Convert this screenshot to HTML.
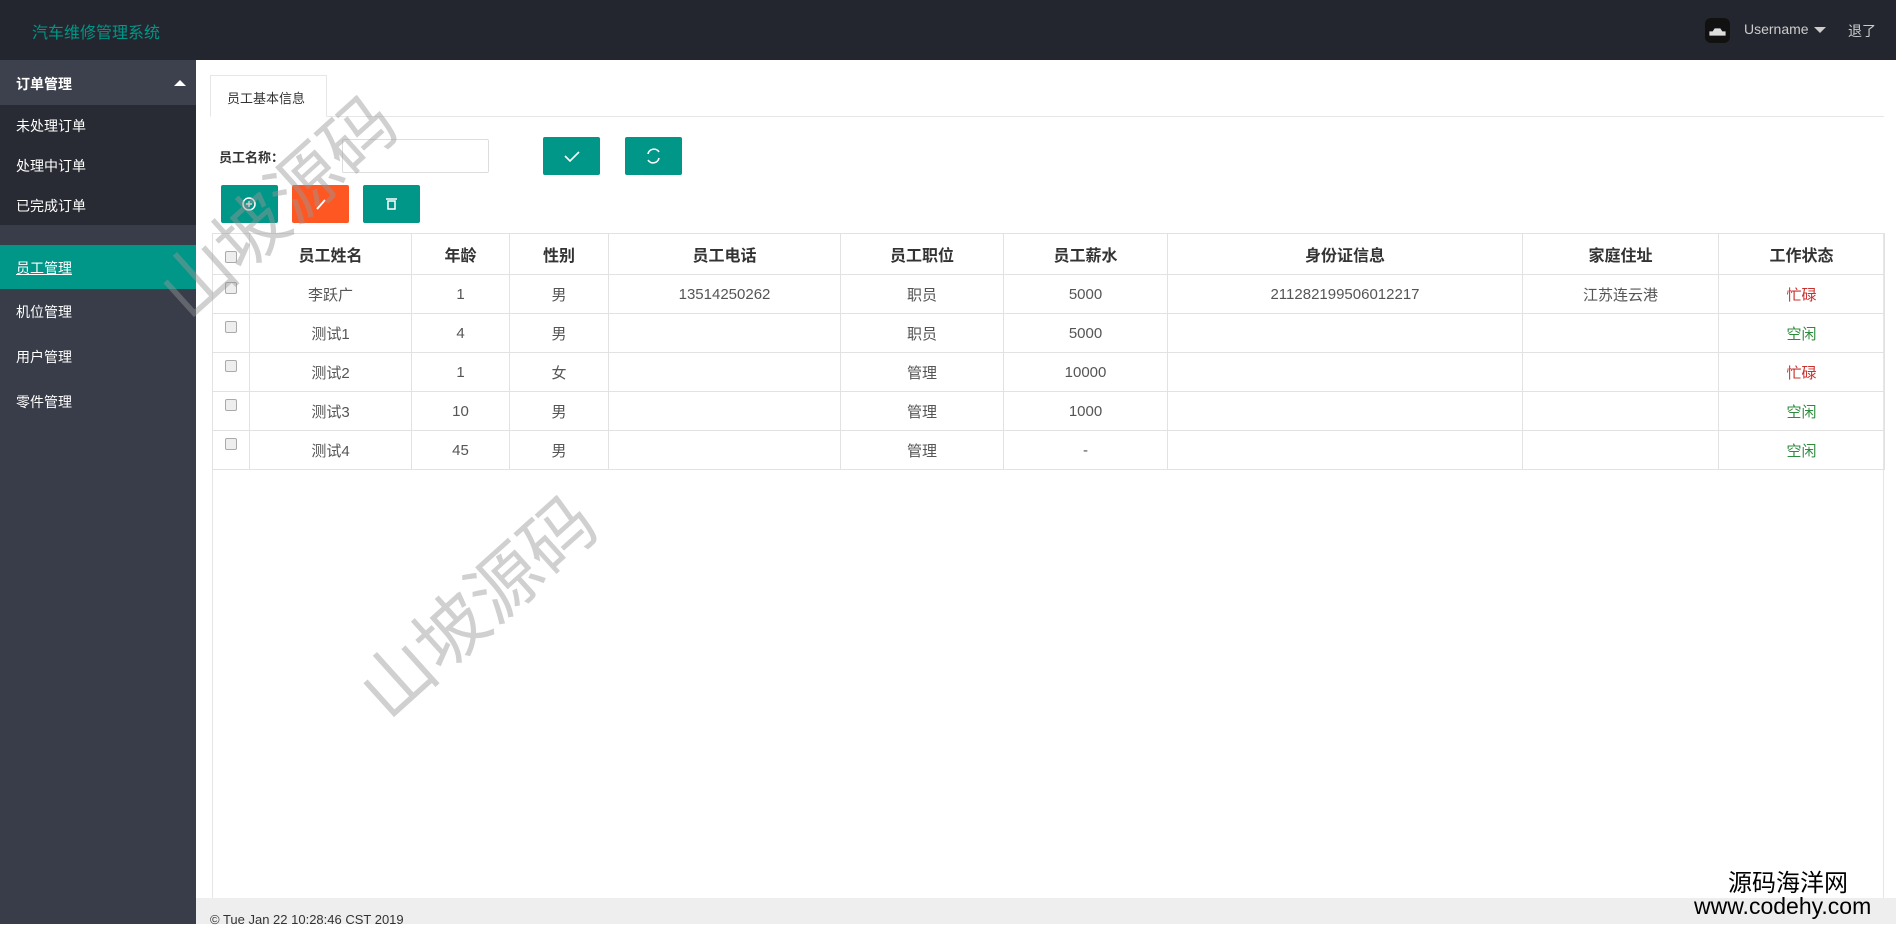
<!DOCTYPE html>
<html><head><meta charset="utf-8"><style>
*{margin:0;padding:0;box-sizing:border-box}
body{width:1896px;height:924px;overflow:hidden;position:relative;background:#fff;font-family:"Liberation Sans","Noto Sans CJK SC",sans-serif;color:#333}
.hdr{position:absolute;left:0;top:0;width:1896px;height:60px;background:#23262e}
.logo{position:absolute;left:32px;top:19px;color:#009688;font-size:16px}
.side{position:absolute;left:0;top:60px;width:196px;height:864px;background:#393d49}
.sh{position:absolute;left:0;top:0;width:196px;height:45px;background:#3d414d;color:#fff;font-size:14px;font-weight:bold;padding:14px 16px}
.tri{position:absolute;right:10px;top:20px;width:0;height:0;border-left:6px solid transparent;border-right:6px solid transparent;border-bottom:6px solid #fff}
.sub{position:absolute;left:0;top:45px;width:196px;height:120px;background:#282b33}
.sub div,.it{position:absolute;left:16px;color:#fff;font-size:14px}
.act{position:absolute;left:0;top:185px;width:196px;height:44px;background:#009688}
.tab{position:absolute;left:210px;top:75px;width:117px;height:42px;border:1px solid #e6e6e6;border-bottom:1px solid #fff;background:#fff;font-size:13px;padding:12px 0 0 16px;color:#333}
.tabline{position:absolute;left:210px;top:116px;width:1674px;height:1px;background:#e6e6e6}
.btn{position:absolute;height:38px;width:57px;border-radius:2px;background:#009688}
.box{position:absolute;left:212px;top:233px;width:1672px;height:666px;border:1px solid #e6e6e6;border-bottom:none}
table{position:absolute;left:212px;top:233px;border-collapse:collapse;font-size:15px}
td,th{border:1px solid #e2e2e2;text-align:center;height:39px;color:#555;font-weight:normal}
th{height:41px;font-weight:bold;color:#333;font-size:16px}
.cb{display:inline-block;width:12px;height:12px;border:1px solid #aaa;border-radius:2px;background:#eee;vertical-align:top;margin-top:-4px}
.r{color:#c9302c}.g{color:#2e8b3d}
.foot{position:absolute;left:196px;top:898px;width:1700px;height:26px;background:#eee;font-size:13px;color:#333;padding:14px 0 0 14px}
.wm{position:absolute;color:rgba(150,150,150,.45);font-size:72px;transform:rotate(-42deg);white-space:nowrap;font-family:"Noto Sans CJK SC",sans-serif}
</style></head><body>
<div class="hdr"><div class="logo">汽车维修管理系统</div>
<div style="position:absolute;left:1705px;top:18px;width:25px;height:25px;border-radius:6px;background:#111"><svg width="25" height="25"><path d="M5 14h15v3H5zM8 14l2-3h5l2 3" stroke="#ddd" stroke-width="1.2" fill="#ddd"/></svg></div>
<div style="position:absolute;left:1744px;top:21px;color:#ccc;font-size:14px">Username</div>
<div style="position:absolute;left:1814px;top:27px;border-left:6px solid transparent;border-right:6px solid transparent;border-top:6px solid #ccc"></div>
<div style="position:absolute;left:1848px;top:21px;color:#ccc;font-size:14px">退了</div>
</div>
<div class="side">
<div class="sh">订单管理<div class="tri"></div></div>
<div class="sub"><div style="top:11px">未处理订单</div><div style="top:51px">处理中订单</div><div style="top:91px">已完成订单</div></div>
<div class="act"><div class="it" style="top:13px;text-decoration:underline">员工管理</div></div>
<div class="it" style="top:242px">机位管理</div>
<div class="it" style="top:287px">用户管理</div>
<div class="it" style="top:332px">零件管理</div>
</div>
<div class="tabline"></div>
<div class="tab">员工基本信息</div>
<div style="position:absolute;left:219px;top:147px;font-size:13px;font-weight:bold">员工名称：</div>
<div style="position:absolute;left:342px;top:139px;width:147px;height:34px;border:1px solid #ddd;border-radius:2px"></div>
<div class="btn" style="left:543px;top:137px"><svg width="57" height="38"><path d="M22 19l5 5 9-9" stroke="#fff" stroke-width="1.6" fill="none"/></svg></div>
<div class="btn" style="left:625px;top:137px"><svg width="57" height="38"><path d="M23 17a6 6 0 0 1 11-2M34 21a6 6 0 0 1-11 2" stroke="#fff" stroke-width="1.6" fill="none"/></svg></div>
<div class="btn" style="left:221px;top:185px"><svg width="57" height="38"><circle cx="28" cy="19" r="6" stroke="#fff" stroke-width="1.5" fill="none"/><path d="M28 16v6M25 19h6" stroke="#fff" stroke-width="1.4"/></svg></div>
<div class="btn" style="left:292px;top:185px;background:#ff5722"><svg width="57" height="38"><path d="M25 24l8-9" stroke="#fff" stroke-width="2"/></svg></div>
<div class="btn" style="left:363px;top:185px"><svg width="57" height="38"><path d="M23 14h11M25 16h7v8h-7z" stroke="#fff" stroke-width="1.5" fill="none"/></svg></div>
<div class="box"></div>
<table>
<colgroup><col style="width:37px"><col style="width:162px"><col style="width:98px"><col style="width:99px"><col style="width:232px"><col style="width:163px"><col style="width:164px"><col style="width:355px"><col style="width:196px"><col style="width:166px"></colgroup>
<tr><th><span class="cb" style="margin-top:6px"></span></th><th>员工姓名</th><th>年龄</th><th>性别</th><th>员工电话</th><th>员工职位</th><th>员工薪水</th><th>身份证信息</th><th>家庭住址</th><th>工作状态</th></tr>
<tr><td><span class="cb"></span></td><td>李跃广</td><td>1</td><td>男</td><td>13514250262</td><td>职员</td><td>5000</td><td>211282199506012217</td><td>江苏连云港</td><td class="r">忙碌</td></tr>
<tr><td><span class="cb"></span></td><td>测试1</td><td>4</td><td>男</td><td></td><td>职员</td><td>5000</td><td></td><td></td><td class="g">空闲</td></tr>
<tr><td><span class="cb"></span></td><td>测试2</td><td>1</td><td>女</td><td></td><td>管理</td><td>10000</td><td></td><td></td><td class="r">忙碌</td></tr>
<tr><td><span class="cb"></span></td><td>测试3</td><td>10</td><td>男</td><td></td><td>管理</td><td>1000</td><td></td><td></td><td class="g">空闲</td></tr>
<tr><td><span class="cb"></span></td><td>测试4</td><td>45</td><td>男</td><td></td><td>管理</td><td>-</td><td></td><td></td><td class="g">空闲</td></tr>
</table>
<div class="foot">© Tue Jan 22 10:28:46 CST 2019</div>
<div class="wm" style="left:130px;top:150px">山坡源码</div>
<div class="wm" style="left:330px;top:550px">山坡源码</div>
<div style="position:absolute;left:1728px;top:868px;font-size:24px;color:#000;font-family:'Noto Sans CJK SC',sans-serif;line-height:26px">源码海洋网</div>
<div style="position:absolute;left:1694px;top:893px;font-size:23px;color:#000;line-height:26px">www.codehy.com</div>
</body></html>
